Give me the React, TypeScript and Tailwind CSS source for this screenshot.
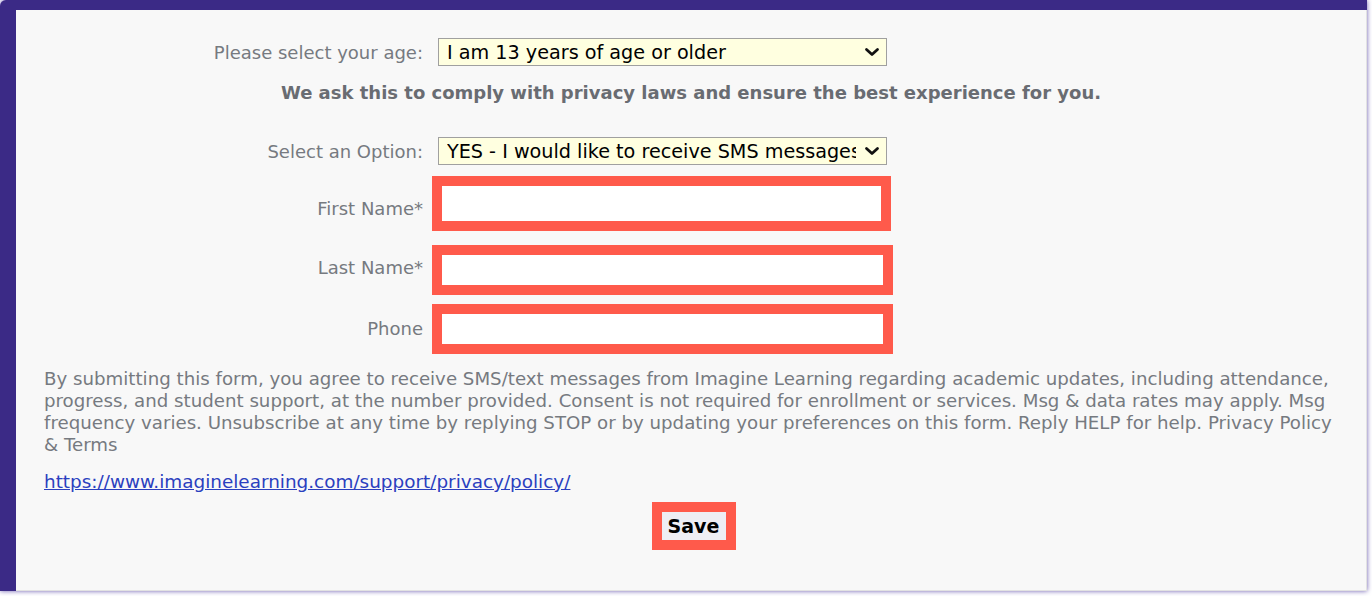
import { useState } from 'react';

const font = { fontFamily: '"DejaVu Sans", Verdana, sans-serif' };

const Chevron = () => (
  <svg
    className="pointer-events-none absolute right-[7px] top-1/2 -translate-y-1/2"
    width="16"
    height="10"
    viewBox="0 0 16 10"
  >
    <path d="M2.5 2.5 L8 7.5 L13.5 2.5" fill="none" stroke="#111" strokeWidth="2.8" strokeLinecap="round" strokeLinejoin="round" />
  </svg>
);

const Select = ({ value, options, onChange }: { value: string; options: string[]; onChange: (v: string) => void }) => (
  <div className="relative w-[449px] h-[28px]">
    <select
      value={value}
      onChange={(e) => onChange(e.target.value)}
      className="appearance-none w-full h-full border border-[#a0a0a0] bg-[#ffffe0] pl-[8px] pr-[30px] text-[19.2px] text-black outline-none overflow-hidden"
      style={font}
    >
      {options.map((o) => (
        <option key={o}>{o}</option>
      ))}
    </select>
    <Chevron />
  </div>
);

const Field = ({ label, width, labelTop, height }: { label: string; width: string; labelTop: string; height: string }) => (
  <div className="flex items-start">
    <div className={`w-[422px] pr-[15px] text-right leading-[20px] text-[#767a80] ${labelTop}`}>{label}</div>
    <div className={`-ml-[6px] border-[10px] border-[#ff5a4b] bg-white ${width} ${height}`}>
      <input className="w-full h-full bg-white outline-none px-2 text-[18px]" style={font} />
    </div>
  </div>
);

export default function App() {
  const [age, setAge] = useState('I am 13 years of age or older');
  const [sms, setSms] = useState('YES - I would like to receive SMS messages');

  return (
    <div className="w-[1372px] h-[596px] bg-white overflow-hidden" style={font}>
      <div className="w-[1367px] h-[591px] bg-[#3b2a86] pt-[10px] pl-[16px] shadow-[0_0_5px_#6a5ab0] rounded-tl-[6px]">
        <div className="h-full bg-[#f8f8f8] border-r border-b border-[#e2e2e2] text-[18px] pt-[28px]">
          <div className="flex items-center h-[28px]">
            <div className="w-[422px] pr-[15px] text-right text-[#767a80]">Please select your age:</div>
            <Select value={age} onChange={setAge} options={['I am 13 years of age or older', 'I am under 13 years of age']} />
          </div>

          <div className="mt-[17px] text-center font-bold leading-[20px] text-[#696c72]">
            We ask this to comply with privacy laws and ensure the best experience for you.
          </div>

          <div className="flex items-center h-[28px] mt-[34px]">
            <div className="w-[422px] pr-[15px] text-right text-[#767a80]">Select an Option:</div>
            <Select value={sms} onChange={setSms} options={['YES - I would like to receive SMS messages', 'NO - I do not want to receive SMS messages']} />
          </div>

          <div className="mt-[11px]">
            <Field label="First Name*" width="w-[459px]" height="h-[55px]" labelTop="mt-[23px]" />
          </div>
          <div className="mt-[14px]">
            <Field label="Last Name*" width="w-[461px]" height="h-[50px]" labelTop="mt-[13px]" />
          </div>
          <div className="mt-[9px]">
            <Field label="Phone" width="w-[461px]" height="h-[50px]" labelTop="mt-[15px]" />
          </div>

          <p className="mt-[14px] pl-[28px] pr-[30px] text-[18.2px] leading-[22px] text-[#767a80]">
            By submitting this form, you agree to receive SMS/text messages from Imagine Learning regarding academic updates, including attendance,
            progress, and student support, at the number provided. Consent is not required for enrollment or services. Msg &amp; data rates may apply. Msg
            frequency varies. Unsubscribe at any time by replying STOP or by updating your preferences on this form. Reply HELP for help. Privacy Policy
            &amp; Terms
          </p>

          <div className="mt-[15px] pl-[28px] leading-[22px]">
            <a href="#" className="text-[18.4px] text-[#2b3fbf] underline">https://www.imaginelearning.com/support/privacy/policy/</a>
          </div>

          <div className="mt-[9px] flex justify-center pl-[5px]">
            <div className="border-[10px] border-[#ff5a4b]">
              <button className="w-[64px] h-[28px] bg-[#eeeef4] font-bold text-[19px] leading-[28px] text-black" style={font}>Save</button>
            </div>
          </div>
        </div>
      </div>
    </div>
  );
}
